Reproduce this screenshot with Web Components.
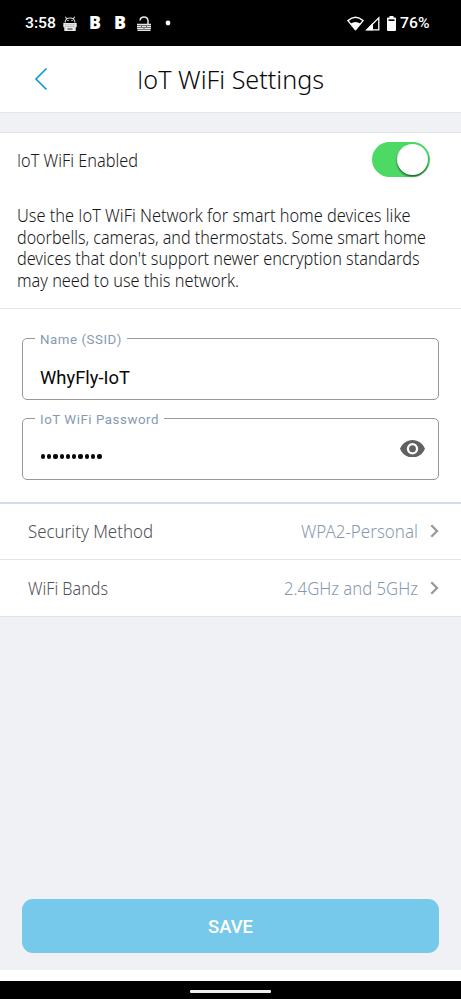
<!DOCTYPE html>
<html lang="en"><head><meta charset="utf-8"><title>IoT WiFi Settings</title>
<style>html,body{margin:0;height:100%;overflow:hidden}body{font-family:"Noto Sans","Open Sans",sans-serif;background:#eff1f5}</style></head>
<body><settings-screen></settings-screen>
<script>
const make=(name,html,after)=>customElements.define(name,class extends HTMLElement{
 connectedCallback(){ if(this.shadowRoot)return; this.attachShadow({mode:'open'}).innerHTML=html; if(after)after(this,this.shadowRoot);}
});
/* A line of text condensed or widened to the width given in w. */
make('fit-text',`<style>:host{display:block;white-space:nowrap;flex:none}span{display:inline-block;vertical-align:top;transform-origin:0 50%}::slotted(b){font-family:"Open Sans",sans-serif;font-weight:inherit;line-height:0}</style><span><slot></slot></span>`,(h,r)=>{
 const w=+h.getAttribute('w'),s=r.querySelector('span');
 const n=s.getBoundingClientRect().width; h.style.width=w+'px'; s.style.transform=`scaleX(${w/n})`;
});
make('status-bar',`<style>:host{display:flex;height:46px;background:#000;color:#fff;box-sizing:border-box;padding:0 32px 0 25px;align-items:center;font:500 15.5px/46px Roboto,sans-serif}
svg{display:block;flex:none}.l,.r{display:flex;align-items:center}.r{margin-left:auto}.b{font:800 17px/46px "Open Sans",sans-serif}</style>
<div class="l"><fit-text w="31">3:58</fit-text>
<svg width="14" height="15" viewBox="0 0 14 15" style="margin-left:7px"><path d="M2.200 6.500V5.500Q3 2 7 2t4.800 3.500v1M3.500 2.500 2.300.7M10.500 2.500 11.700.7" fill="none" stroke="#ddd" stroke-width="1.100"/><path d="M4.300 4.500h1.400M8.300 4.500h1.400" stroke="#ddd"/><path d="M.3 7h13.400v4l-1 .5V15H1.300v-3.500l-1-.5z" fill="#e8e8e8"/><path d="M2 8.700h10M2 10.500h10" stroke="#999" stroke-width=".8" stroke-dasharray="1 .6"/><path d="M4.500 13h5" stroke="#222"/></svg>
<fit-text class="b" w="12" style="margin-left:12px">B</fit-text><fit-text class="b" w="12" style="margin-left:13px">B</fit-text>
<svg width="14" height="15" viewBox="0 0 14 15" style="margin-left:11px" fill="none" stroke="#e8e8e8"><path d="M3 4.500Q3.500 1 7 1t4 3.500V8" stroke-width="1.500"/><path d="M0 8.500h14M0 10.500h14M0 12.500h14M.5 14.500h13" stroke-width="1.300"/><path d="M4.500 10v1M9.500 10v1M7 12v1" stroke="#444" stroke-width=".8"/></svg>
<svg width="6" height="6" style="margin-left:14px"><circle cx="3" cy="3" r="2.400" fill="#fff"/></svg></div>
<div class="r"><svg width="17" height="15" viewBox="0 0 17 15"><path d="M.9 4.600Q8.500-2 16.100 4.600L8.500 13.800z" fill="none" stroke="#fff" stroke-width="1.400" stroke-linejoin="round"/><path d="M3.800 7.600Q8.500 4.400 13.200 7.600L8.500 13.500z" fill="#fff"/></svg>
<svg width="15" height="15" viewBox="0 0 15 15" style="margin-left:1px"><path d="M1.800 13.800H13.800V1.800z" fill="none" stroke="#fff" stroke-width="1.300"/><path d="M1 14.200 8 7v7.200z" fill="#fff"/></svg>
<svg width="9" height="15" viewBox="0 0 9 15" style="margin-left:7px"><path d="M2.500 0h4v1.500H8q1 0 1 1V14q0 1-1 1H1q-1 0-1-1V2.500q0-1 1-1h1.500z" fill="#fff"/><path d="M1.500 3.300h6V5h-6z" fill="#111"/></svg>
<fit-text w="29.500" style="margin-left:4px">76%</fit-text></div>`);
make('title-bar',`<style>:host{display:grid;grid-template-columns:137px 1fr;height:67px;box-sizing:border-box;border-bottom:1px solid #e1e6eb;background:#fff;align-items:center;color:#080808;font-weight:300;font-size:25px;line-height:34px}svg{margin-left:34px;display:block}</style>
<svg width="14" height="24" viewBox="0 0 14 24" fill="none" stroke="#0d9ddb" stroke-width="1.700"><path d="M12.500 1.500 2 12l10.500 10.500"/></svg><slot></slot>`);
make('toggle-switch',`<style>:host{display:flex;justify-content:flex-end;width:57.500px;height:35px;border-radius:18px;background:#4cd964;padding:1.500px;box-sizing:border-box}i{width:31.500px;height:31.500px;border-radius:50%;background:#fff;box-shadow:0 1.500px 2px #0009}</style><i></i>`);
make('enable-section',`<style>:host{display:block;box-sizing:border-box;height:177px;border-top:1px solid #e1e6eb;border-bottom:1px solid #e1e6eb;background:#fff;padding:9px 17px 0;color:#191919;font-weight:350;font-size:17.400px;line-height:21.400px}.top{display:flex;justify-content:space-between;align-items:center;height:35px;padding-right:14.500px}::slotted([slot=label]){padding-top:2px}.copy{margin-top:28.300px}</style><div class="top"><slot name="label"></slot><toggle-switch></toggle-switch></div><div class="copy"><slot></slot></div>`);
make('outlined-field',`<style>:host{display:block;height:66px}fieldset{box-sizing:border-box;height:66px;margin:0;padding:0 13px 0 12px;border:1.300px solid #999;border-radius:5px;min-width:0}legend{padding:0 5px;font:400 13.300px/10px Roboto,sans-serif;letter-spacing:.55px;color:#8799b1;height:9px}legend slot{display:block;padding-top:1px}.v{height:56px;display:flex;align-items:center;justify-content:space-between;padding:0 0 0 5px;box-sizing:border-box;font:400 18px/24px Roboto,sans-serif;color:#080808}::slotted(fit-text:not([slot])){padding-top:13px}</style><fieldset><legend><slot name="label"></slot></legend><div class="v"><slot></slot></div></fieldset>`);
make('eye-icon',`<style>:host{display:block;margin-top:-5px}svg{display:block}</style><svg width="25" height="17.500" viewBox="0 0 22 15" preserveAspectRatio="none"><path fill="#616161" d="M11 0C6 0 1.730 3.110 0 7.500 1.730 11.890 6 15 11 15s9.270-3.110 11-7.500C20.270 3.110 16 0 11 0zm0 12.500a5 5 0 1 1 0-10 5 5 0 0 1 0 10zm0-8a3 3 0 1 0 0 6 3 3 0 0 0 0-6z"/></svg>`);
make('password-dots',`<style>:host{display:flex;gap:2.100px;padding:11px 0 0 .8px}i{width:4.200px;height:4.200px;border-radius:50%;background:#080808}</style>`+'<i></i>'.repeat(10));
make('nav-row',`<style>:host{display:flex;align-items:center;box-sizing:border-box;height:57px;border-bottom:1px solid #dfe4ea;background:#fff;padding:0 22px 1px 28px;font-weight:300;font-size:17.500px;line-height:24px;color:#505157}.v{margin-left:auto;color:#8799b1}svg{margin-left:12px}</style><slot></slot><div class="v"><slot name="value"></slot></div><svg width="9" height="14" viewBox="0 0 9 14" fill="none" stroke="#999" stroke-width="2.300"><path d="m1.300 1.300 5.700 5.700-5.700 5.700"/></svg>`);
make('save-button',`<style>:host{display:flex;align-items:center;justify-content:center;height:54px;border-radius:11px;background:#77c9eb;color:#fff;font:500 18px/24px Roboto,sans-serif;margin:0 22px 17px;padding-top:1px;box-sizing:border-box}</style><slot></slot>`);
make('settings-screen',`<style>:host{display:flex;flex-direction:column;width:461px;height:999px;background:#eff1f5}.gap{height:19px}.fields{box-sizing:border-box;height:195px;padding:25px 22px 0;background:#fff;border-bottom:2px solid #d7dde5;display:flex;flex-direction:column;gap:14px}nav-row:first-of-type{height:56px}.space{flex:1}.foot{height:11px;background:#fff}.nav{height:18px;background:#000;display:flex;justify-content:center;align-items:center}.nav i{width:81px;height:3px;border-radius:1px;background:#eee;margin-top:2px}</style>
<status-bar></status-bar>
<title-bar><fit-text w="187"><b>I</b>oT WiFi Settings</fit-text></title-bar><div class="gap"></div>
<enable-section><fit-text slot="label" w="121"><b>I</b>oT WiFi Enabled</fit-text>
<fit-text w="393.500">Use the <b>I</b>oT WiFi Network for smart home devices like</fit-text><fit-text w="409">doorbells, cameras, and thermostats. Some smart home</fit-text><fit-text w="402.500">devices that don't support newer encryption standards</fit-text><fit-text w="222">may need to use this network.</fit-text></enable-section>
<div class="fields"><outlined-field><fit-text slot="label" w="82">Name (SSID)</fit-text><fit-text w="90">WhyFly-IoT</fit-text></outlined-field>
<outlined-field><fit-text slot="label" w="119">IoT WiFi Password</fit-text><password-dots></password-dots><eye-icon></eye-icon></outlined-field></div>
<nav-row><fit-text w="125">Security Method</fit-text><fit-text slot="value" w="117">WPA2-Personal</fit-text></nav-row>
<nav-row><fit-text w="80">WiFi Bands</fit-text><fit-text slot="value" w="134">2.4GHz and 5GHz</fit-text></nav-row>
<div class="space"></div><save-button><fit-text w="45">SAVE</fit-text></save-button><div class="foot"></div><div class="nav"><i></i></div>`);
</script></body></html>
